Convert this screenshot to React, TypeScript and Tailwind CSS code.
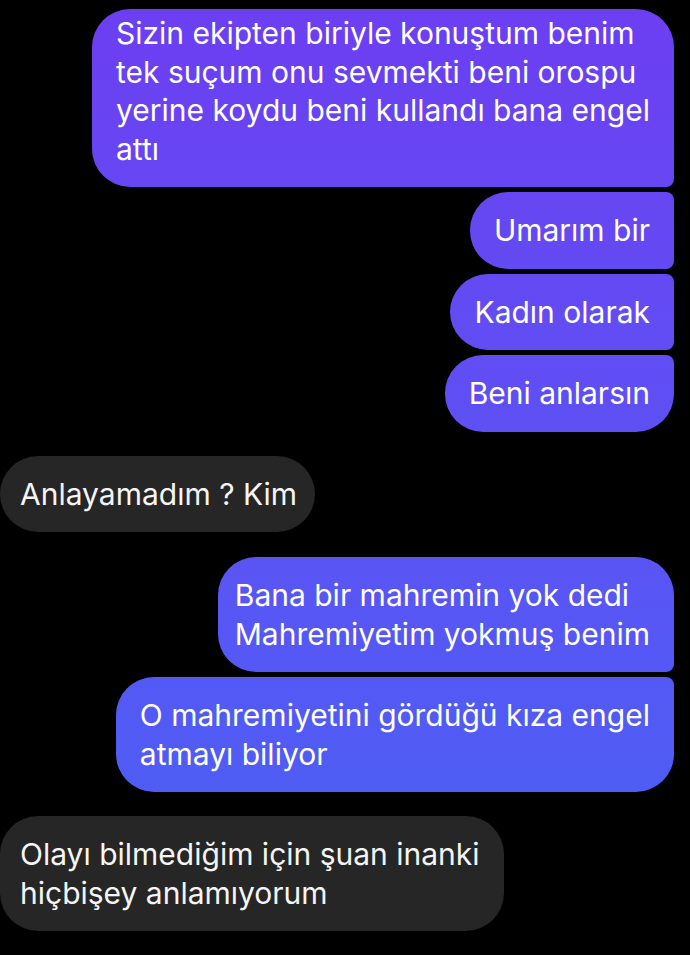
import React from "react";

const sentBase =
  "text-white px-6 py-[19px] bg-fixed bg-linear-to-b from-[#6c3ef2] to-[#4662f5] w-fit";
const recvBase = "text-[#f5f5f5] bg-[#262626] pl-5 pr-6 py-[19px] w-fit rounded-[38px]";

export default function App() {
  return (
    <div
      className="min-h-[955px] w-[690px] bg-black overflow-hidden pt-[9px] text-[30px] leading-[38.5px]"
      style={{ fontFamily: "Inter, 'Noto Sans', sans-serif" }}
    >
      <div className="flex flex-col items-end pr-4 gap-[5px]">
        <div className={`${sentBase} pt-[5px] rounded-l-[38px] rounded-tr-[38px] rounded-br-[8px]`}>
          Sizin ekipten biriyle konuştum benim
          <br />
          tek suçum onu sevmekti beni orospu
          <br />
          yerine koydu beni kullandı bana engel
          <br />
          attı
        </div>
        <div className={`${sentBase} rounded-l-[38px] rounded-r-[8px]`}>Umarım bir</div>
        <div className={`${sentBase} rounded-l-[38px] rounded-r-[8px]`}>Kadın olarak</div>
        <div className={`${sentBase} rounded-l-[38px] rounded-tr-[8px] rounded-br-[38px]`}>
          Beni anlarsın
        </div>
      </div>

      <div className="mt-[24px]">
        <div className={`${recvBase} pr-[18px]`}>Anlayamadım ? Kim</div>
      </div>

      <div className="mt-[25px] flex flex-col items-end pr-4 gap-[5px]">
        <div className={`${sentBase} pl-[17px] rounded-l-[38px] rounded-tr-[38px] rounded-br-[8px]`}>
          Bana bir mahremin yok dedi
          <br />
          Mahremiyetim yokmuş benim
        </div>
        <div className={`${sentBase} rounded-l-[38px] rounded-tr-[8px] rounded-br-[38px]`}>
          O mahremiyetini gördüğü kıza engel
          <br />
          atmayı biliyor
        </div>
      </div>

      <div className="mt-[24px]">
        <div className={recvBase}>
          Olayı bilmediğim için şuan inanki
          <br />
          hiçbişey anlamıyorum
        </div>
      </div>
    </div>
  );
}
